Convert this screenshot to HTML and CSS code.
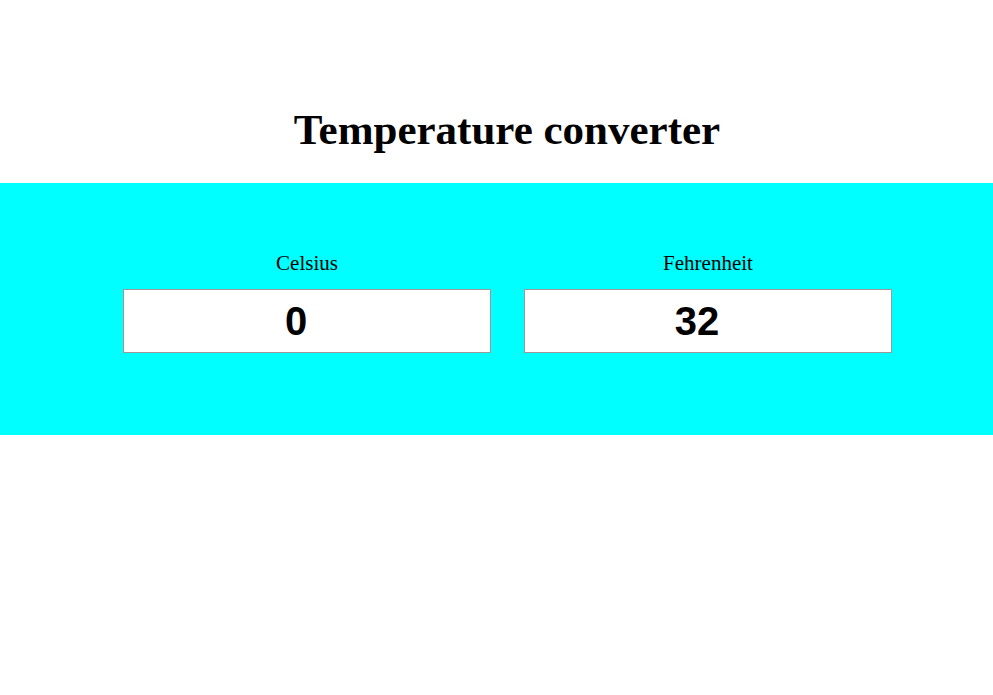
FILE: index.html
```html
<!DOCTYPE html>
<html>
<head>
<meta charset="utf-8">
<link rel="stylesheet" href="styles.css">
</head>
<body>
<h1 class="title">Temperature converter</h1>
<div class="band">
  <div class="fields">
    <div class="field">
      <label class="label">Celsius</label>
      <input class="box" type="text" value="0">
    </div>
    <div class="field">
      <label class="label">Fehrenheit</label>
      <input class="box" type="text" value="32">
    </div>
  </div>
</div>
</body>
</html>
```
FILE: styles.css
```css
html, body {
  margin: 0;
  padding: 0;
  background: #fff;
  font-family: "Liberation Serif", "Times New Roman", serif;
}
.title {
  margin: 0;
  height: 183px;
  box-sizing: border-box;
  padding-top: 105px;
  padding-left: 21px;
  text-align: center;
  font-size: 43px;
  line-height: 50px;
  font-weight: bold;
  color: #000;
}
.band {
  background: #00ffff;
  height: 252px;
  box-sizing: border-box;
  padding-top: 68px;
  padding-left: 123px;
}
.fields {
  display: grid;
  grid-template-columns: 368px 368px;
  column-gap: 33px;
}
.field {
  display: flex;
  flex-direction: column;
  align-items: stretch;
}
.label {
  text-align: center;
  font-size: 21px;
  line-height: 24px;
  height: 24px;
  margin-bottom: 14px;
  color: #000;
}
.box {
  box-sizing: border-box;
  width: 368px;
  height: 64px;
  margin: 0;
  padding: 0 22px 0 0;
  border: 1px solid #999;
  background: #fff;
  text-align: center;
  font-family: "Liberation Sans", Arial, sans-serif;
  font-weight: bold;
  font-size: 40px;
  color: #000;
  outline: none;
}
```
